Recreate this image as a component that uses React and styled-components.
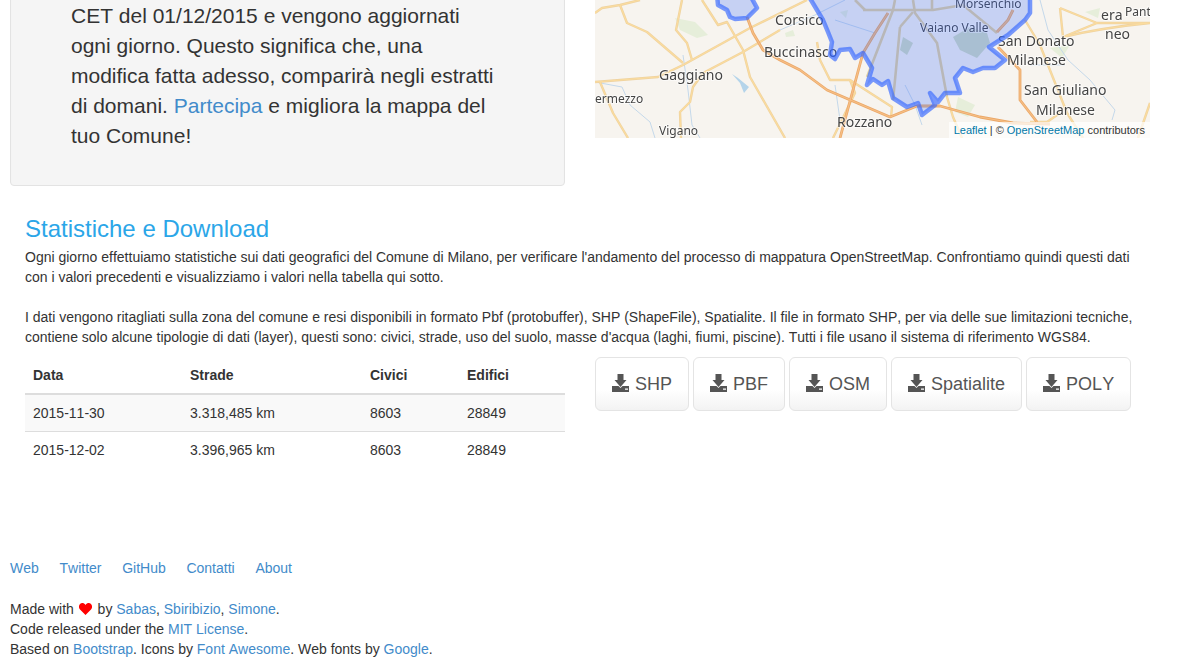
import styled, { createGlobalStyle } from 'styled-components';

const GlobalStyle = createGlobalStyle`
  html, body {
    margin: 0;
    background: #fff;
  }
  body {
    font-family: "Liberation Sans", Arial, sans-serif;
    font-size: 14px;
    line-height: 20px;
    color: #333;
    font-kerning: none;
  }
  a {
    color: #428bca;
    text-decoration: none;
  }
`;

const roads = [
  'M595 13L602 8L620 5L640 0',
  'M620 5L627 23L647 32L683 63',
  'M682 0L676 30L687 43L692 60',
  'M702 0L718 25L727 22L743 50L750 77L785 138',
  'M595 82L658 77L683 65L750 28L807 0',
  'M703 73L743 52L780 30',
  'M703 73L693 87L690 102L680 112L681 138',
  'M600 82L613 113L628 138',
  'M820 60L830 80L850 80L892 107L891 117',
  'M817 42L820 60',
  'M850 80L855 93L833 138',
  'M1060 8L1063 37L1097 23L1060 8',
  'M1063 37Q1100 28 1150 23L1097 23',
  'M1025 20L1040 45L1067 113L1083 138',
  'M1150 103L1138 138',
  'M1060 113L1047 122L1030 122',
  'M947 97L953 117L962 138',
];

const motorways = [
  'M747 17L753 33L763 50L780 60L800 70L827 90L890 117L917 106L940 106L980 117L1013 123L1050 124',
  'M888 13L875 33L863 53L840 138',
  'M998 47L1020 70L1020 100L1037 122',
  'M997 32L1008 20L1013 10',
];

const cityRoads = [
  'M863 10L933 10L963 5',
  'M900 27L895 80L893 100',
  'M913 12L900 27',
  'M913 0L915 13L937 43L947 97',
  'M895 0L893 10L867 77',
  'M932 0L932 10',
  'M855 0L865 10',
  'M963 5L997 33',
];

const streams = [
  'M683 55L688 90L692 125L700 138',
  'M595 82L622 87L630 105L650 122L655 138',
  'M780 30L815 15L845 0',
  'M835 20L875 33',
  'M1040 0L1048 30L1068 60L1090 80L1115 110L1112 120',
  'M1030 65L1065 65',
  'M905 85L915 105L922 125',
  'M835 85L840 120',
];

const greens = [
  'M675 18L695 22L708 35L697 38L680 30Z',
  'M785 33L793 30L795 36L786 37Z',
  'M958 97L975 105L968 117L955 112Z',
  'M1050 48L1070 45L1062 58Z',
  'M1085 12L1100 8L1098 18Z',
  'M840 12L848 10L846 18Z',
];

const labels = [
  { x: 775, y: 25, text: 'Corsico', size: 14 },
  { x: 764, y: 57, text: 'Buccinasco', size: 14 },
  { x: 659, y: 80, text: 'Gaggiano', size: 14 },
  { x: 595, y: 103, text: 'ermezzo', size: 12 },
  { x: 659, y: 135, text: 'Vigano', size: 12 },
  { x: 837, y: 127, text: 'Rozzano', size: 14 },
  { x: 955, y: 8, text: 'Morsenchio', size: 12 },
  { x: 920, y: 32, text: 'Vaiano Valle', size: 12 },
  { x: 998, y: 46, text: 'San Donato', size: 14 },
  { x: 1007, y: 65, text: 'Milanese', size: 14 },
  { x: 1024, y: 95, text: 'San Giuliano', size: 14 },
  { x: 1036, y: 115, text: 'Milanese', size: 14 },
  { x: 1101, y: 20, text: 'era', size: 14 },
  { x: 1125, y: 16, text: 'Pant', size: 12 },
  { x: 1105, y: 39, text: 'neo', size: 14 },
];

const MILAN = 'M808 -5L823 20L828 32L832 42L830 55L835 59L840 50L850 49L855 58L863 53L872 68L867 85L873 79L882 85L888 81L893 98L907 107L918 103L922 115L935 105L930 93L938 102L945 93L960 93L955 78L963 68L973 72L983 68L995 68L1005 60L989 47L1008 35L1025 20L1030 13L1030 -5Z';
const ENCLAVE = 'M717 -5L718 5L727 10L730 17L735 19L747 18L757 8L750 -5Z';

function MapDrawing() {
  return (
    <MapSvg viewBox="595 0 555 138">
      {greens.map((d) => <path key={d} d={d} fill="#e6eeda" />)}
      <path d="M732 74L738 78L749 87L744 93L740 83Z" fill="#b4d4ea" />
      <path d="M953 37L970 27L987 33L990 43L977 58L960 50Z" fill="#d0dcc3" />
      <path d="M903 37L913 43L907 55L900 50Z" fill="#d0dcc3" />
      {streams.map((d) => <path key={d} d={d} fill="none" stroke="#c4d8ea" strokeWidth="1" />)}
      {roads.map((d) => <path key={d} d={d} fill="none" stroke="#eed2a0" strokeWidth="2.4" strokeLinejoin="round" />)}
      {roads.map((d) => <path key={d + 'i'} d={d} fill="none" stroke="#fbdc9e" strokeWidth="1.1" strokeLinejoin="round" />)}
      {cityRoads.map((d) => <path key={d} d={d} fill="none" stroke="#e4d2a0" strokeWidth="2.6" strokeLinejoin="round" />)}
      {motorways.map((d) => <path key={d} d={d} fill="none" stroke="#eba868" strokeWidth="2.8" strokeLinejoin="round" />)}
      {motorways.map((d) => <path key={d + 'i'} d={d} fill="none" stroke="#f6bf86" strokeWidth="1.2" strokeLinejoin="round" />)}
      {labels.map((l) => (
        <MapLabel key={l.text + l.x} x={l.x} y={l.y} fontSize={l.size}>{l.text}</MapLabel>
      ))}
      <path d={MILAN} fill="#3366ff" fillOpacity="0.25" stroke="#3366ff" strokeOpacity="0.65" strokeWidth="4.5" strokeLinejoin="round" />
      <path d={ENCLAVE} fill="#3366ff" fillOpacity="0.25" stroke="#3366ff" strokeOpacity="0.65" strokeWidth="4.5" strokeLinejoin="round" />
    </MapSvg>
  );
}

function DownloadIcon() {
  return (
    <IconSvg viewBox="0 0 17 18">
      <path d="M5.500 0h6v6h3l-6 7l-6-7h3z" />
      <path fillRule="evenodd" d="M0 12h6.500l2 2l2-2h6.500v6H0zM13 14.500v1.300h3v-1.300z" />
    </IconSvg>
  );
}

function Heart() {
  return (
    <HeartSvg viewBox="0 0 13 12">
      <path d="M6.500 12L1 6.500C-.5 5 -.3 2.300 1 1C2.500 -.4 5 -.2 6.500 2C8 -.2 10.500 -.4 12 1C13.300 2.300 13.500 5 12 6.500z" />
    </HeartSvg>
  );
}

const rows = [
  { date: '2015-11-30', roads: '3.318,485 km', civici: '8603', edifici: '28849' },
  { date: '2015-12-02', roads: '3.396,965 km', civici: '8603', edifici: '28849' },
];

const downloads = ['SHP', 'PBF', 'OSM', 'Spatialite', 'POLY'];
const footerLinks = ['Web', 'Twitter', 'GitHub', 'Contatti', 'About'];

function App() {
  return (
    <Page>
      <GlobalStyle />
      <TopRow>
        <Well>
          <WellText>
            CET del 01/12/2015 e vengono aggiornati<br />
            ogni giorno. Questo significa che, una<br />
            modifica fatta adesso, comparirà negli estratti<br />
            di domani. <a href="#">Partecipa</a> e migliora la mappa del<br />
            tuo Comune!
          </WellText>
        </Well>
        <MapBox>
          <MapDrawing />
          <Attribution>
            <LeafletLink href="#">Leaflet</LeafletLink> | © <LeafletLink href="#">OpenStreetMap</LeafletLink> contributors
          </Attribution>
        </MapBox>
      </TopRow>

      <Stats>
        <Title>Statistiche e Download</Title>
        <Intro>
          Ogni giorno effettuiamo statistiche sui dati geografici del Comune di Milano, per verificare l'andamento del processo di mappatura OpenStreetMap. Confrontiamo quindi questi dati con i valori precedenti e visualizziamo i valori nella tabella qui sotto.
          <br /><br />
          I dati vengono ritagliati sulla zona del comune e resi disponibili in formato Pbf (protobuffer), SHP (ShapeFile), Spatialite. Il file in formato SHP, per via delle sue limitazioni tecniche, contiene solo alcune tipologie di dati (layer), questi sono: civici, strade, uso del suolo, masse d'acqua (laghi, fiumi, piscine). Tutti i file usano il sistema di riferimento WGS84.
        </Intro>
        <DataRow>
          <Table>
            <colgroup>
              <col width="157" />
              <col width="180" />
              <col width="97" />
              <col width="106" />
            </colgroup>
            <thead>
              <tr>
                <Th>Data</Th>
                <Th>Strade</Th>
                <Th>Civici</Th>
                <Th>Edifici</Th>
              </tr>
            </thead>
            <tbody>
              {rows.map((r) => (
                <Tr key={r.date}>
                  <Td>{r.date}</Td>
                  <Td>{r.roads}</Td>
                  <Td>{r.civici}</Td>
                  <Td>{r.edifici}</Td>
                </Tr>
              ))}
            </tbody>
          </Table>
          <Buttons>
            {downloads.map((name) => (
              <DownloadButton key={name} href="#">
                <DownloadIcon />
                {name}
              </DownloadButton>
            ))}
          </Buttons>
        </DataRow>
      </Stats>

      <Footer>
        <FooterNav>
          {footerLinks.map((l) => <a key={l} href="#">{l}</a>)}
        </FooterNav>
        <Credits>
          Made with <Heart /> by <a href="#">Sabas</a>, <a href="#">Sbiribizio</a>, <a href="#">Simone</a>.<br />
          Code released under the <a href="#">MIT License</a>.<br />
          Based on <a href="#">Bootstrap</a>. Icons by <a href="#">Font Awesome</a>. Web fonts by <a href="#">Google</a>.
        </Credits>
      </Footer>
    </Page>
  );
}

const Page = styled.div`
  height: 670px;
  overflow: hidden;
`;

const TopRow = styled.div`
  display: grid;
  grid-template-columns: 555px 555px;
  column-gap: 30px;
  align-items: start;
  padding-left: 10px;
`;

const Well = styled.div`
  margin-top: -19px;
  padding: 19px 19px 34px 60px;
  background: #f5f5f5;
  border: 1px solid #e3e3e3;
  border-radius: 4px;
  box-shadow: inset 0 1px 1px rgba(0, 0, 0, 0.05);
`;

const WellText = styled.div`
  font-size: 21px;
  line-height: 30px;
  font-weight: 300;
`;

const MapBox = styled.div`
  position: relative;
  height: 138px;
  overflow: hidden;
  background: #f7f4ef;
`;

const MapSvg = styled.svg`
  display: block;
  width: 555px;
  height: 138px;
  filter: blur(0.35px);
`;

const MapLabel = styled.text`
  font-family: "Noto Sans", "Open Sans", sans-serif;
  fill: #444;
  stroke: rgba(255, 255, 255, 0.6);
  stroke-width: 2px;
  paint-order: stroke;
`;

const Attribution = styled.div`
  position: absolute;
  right: 0;
  bottom: 0;
  padding: 0 5px;
  font-size: 11px;
  line-height: 16px;
  background: rgba(255, 255, 255, 0.7);
`;

const LeafletLink = styled.a`
  color: #0078a8;
`;

const Stats = styled.section`
  padding: 30px 47px 0 25px;
`;

const Title = styled.h3`
  margin: 0 0 5px;
  font-size: 24px;
  line-height: 26px;
  font-weight: 400;
  color: #2ba6e8;
`;

const Intro = styled.p`
  margin: 0 0 10px;
  width: 1110px;
`;

const DataRow = styled.div`
  display: flex;
  gap: 30px;
  align-items: flex-start;
`;

const Table = styled.table`
  width: 540px;
  table-layout: fixed;
  border-collapse: collapse;
  border-spacing: 0;
`;

const Th = styled.th`
  padding: 8px;
  text-align: left;
  font-weight: 700;
  border-bottom: 2px solid #ddd;
`;

const Tr = styled.tr`
  &:nth-child(odd) {
    background: #f9f9f9;
  }
  & + & td {
    border-top: 1px solid #ddd;
  }
`;

const Td = styled.td`
  padding: 8px;
`;

const Buttons = styled.div`
  display: flex;
  gap: 4px;
`;

const DownloadButton = styled.a`
  display: flex;
  align-items: center;
  gap: 6px;
  box-sizing: border-box;
  height: 54px;
  padding: 0 16px;
  font-size: 18px;
  color: #555;
  border: 1px solid #e4e4e4;
  border-radius: 6px;
  background: linear-gradient(#fff 60%, #f3f3f3);
`;

const IconSvg = styled.svg`
  width: 17px;
  height: 18px;
  margin-top: -3px;
  fill: #555;
`;

const Footer = styled.footer`
  padding: 90px 0 0 10px;
`;

const FooterNav = styled.nav`
  display: flex;
  gap: 20.7px;
`;

const Credits = styled.p`
  margin: 21px 0 0;
`;

const HeartSvg = styled.svg`
  display: inline-block;
  width: 13px;
  height: 12px;
  margin: 0 2px 0 1px;
  vertical-align: -1px;
  fill: #f00;
`;

export default App;
